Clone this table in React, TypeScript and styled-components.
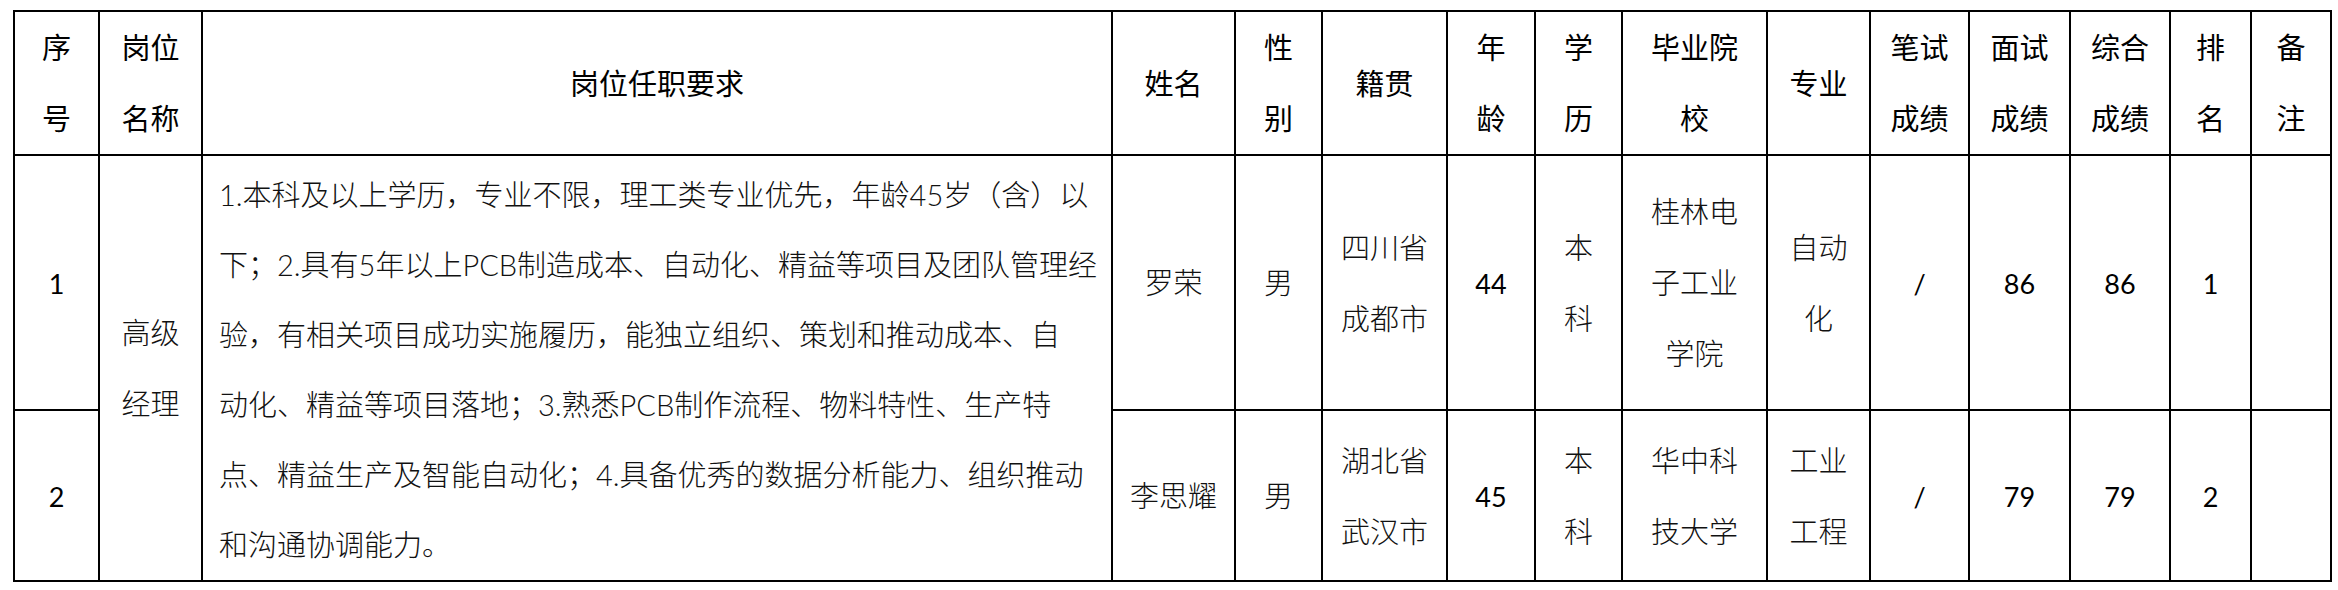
import React from 'react';
import styled, { createGlobalStyle } from 'styled-components';

const GlobalStyle = createGlobalStyle`
  html, body {
    margin: 0;
    padding: 0;
    background: #ffffff;
  }
  body {
    width: 2338px;
    height: 590px;
    overflow: hidden;
  }
`;

const Page = styled.div`
  padding: 10px 0 0 13px;
`;

const Table = styled.table`
  border-collapse: collapse;
  table-layout: fixed;
  width: 2317px;
  font-family: "Lato", "Noto Sans CJK SC", sans-serif;
  font-size: 29px;
  color: #000;
`;

const HeadRow = styled.tr`
  height: 143px;
`;

const BodyRow = styled.tr<{ $h: number }>`
  height: ${(p) => p.$h}px;
`;

const Th = styled.th`
  border: 2px solid #000;
  padding: 0;
  font-weight: 400;
  line-height: 71px;
  text-align: center;
  vertical-align: middle;
  white-space: pre-line;
  color: #000;
`;

const Td = styled.td`
  border: 2px solid #000;
  padding: 0;
  font-weight: 300;
  line-height: 71px;
  text-align: center;
  vertical-align: middle;
  white-space: pre-line;
  color: #111;
`;

const DescCell = styled.td`
  border: 2px solid #000;
  padding: 3px 0 0 16px;
  font-weight: 300;
  line-height: 70px;
  text-align: left;
  vertical-align: middle;
  color: #111;
`;

const DescLine = styled.div`
  white-space: nowrap;
`;

const Num = styled.span`
  font-size: 27px;
  font-weight: 400;
  color: #000;
`;

const widths = [85, 103, 910, 123, 87, 125, 88, 87, 145, 103, 99, 101, 100, 81, 80];

const headers = [
  '序\n号',
  '岗位\n名称',
  '岗位任职要求',
  '姓名',
  '性\n别',
  '籍贯',
  '年\n龄',
  '学\n历',
  '毕业院\n校',
  '专业',
  '笔试\n成绩',
  '面试\n成绩',
  '综合\n成绩',
  '排\n名',
  '备\n注',
];

const descLines = [
  '1.本科及以上学历，专业不限，理工类专业优先，年龄45岁（含）以',
  '下；2.具有5年以上PCB制造成本、自动化、精益等项目及团队管理经',
  '验，有相关项目成功实施履历，能独立组织、策划和推动成本、自',
  '动化、精益等项目落地；3.熟悉PCB制作流程、物料特性、生产特',
  '点、精益生产及智能自动化；4.具备优秀的数据分析能力、组织推动',
  '和沟通协调能力。',
];

type Person = {
  no: string;
  name: string;
  gender: string;
  origin: string;
  age: string;
  edu: string;
  school: string;
  major: string;
  written: string;
  interview: string;
  total: string;
  rank: string;
  note: string;
  height: number;
};

const people: Person[] = [
  {
    no: '1',
    name: '罗荣',
    gender: '男',
    origin: '四川省\n成都市',
    age: '44',
    edu: '本\n科',
    school: '桂林电\n子工业\n学院',
    major: '自动\n化',
    written: '/',
    interview: '86',
    total: '86',
    rank: '1',
    note: '',
    height: 255,
  },
  {
    no: '2',
    name: '李思耀',
    gender: '男',
    origin: '湖北省\n武汉市',
    age: '45',
    edu: '本\n科',
    school: '华中科\n技大学',
    major: '工业\n工程',
    written: '/',
    interview: '79',
    total: '79',
    rank: '2',
    note: '',
    height: 171,
  },
];

export default function App() {
  return (
    <>
      <GlobalStyle />
      <Page>
        <Table>
          <colgroup>
            {widths.map((w, i) => (
              <col key={i} style={{ width: w }} />
            ))}
          </colgroup>
          <thead>
            <HeadRow>
              {headers.map((h) => (
                <Th key={h}>{h}</Th>
              ))}
            </HeadRow>
          </thead>
          <tbody>
            {people.map((p, i) => (
              <BodyRow key={p.no} $h={p.height}>
                <Td>
                  <Num>{p.no}</Num>
                </Td>
                {i === 0 && (
                  <>
                    <Td rowSpan={2}>{'高级\n经理'}</Td>
                    <DescCell rowSpan={2}>
                      {descLines.map((l) => (
                        <DescLine key={l}>{l}</DescLine>
                      ))}
                    </DescCell>
                  </>
                )}
                <Td>{p.name}</Td>
                <Td>{p.gender}</Td>
                <Td>{p.origin}</Td>
                <Td>
                  <Num>{p.age}</Num>
                </Td>
                <Td>{p.edu}</Td>
                <Td>{p.school}</Td>
                <Td>{p.major}</Td>
                <Td>
                  <Num>{p.written}</Num>
                </Td>
                <Td>
                  <Num>{p.interview}</Num>
                </Td>
                <Td>
                  <Num>{p.total}</Num>
                </Td>
                <Td>
                  <Num>{p.rank}</Num>
                </Td>
                <Td>{p.note}</Td>
              </BodyRow>
            ))}
          </tbody>
        </Table>
      </Page>
    </>
  );
}
